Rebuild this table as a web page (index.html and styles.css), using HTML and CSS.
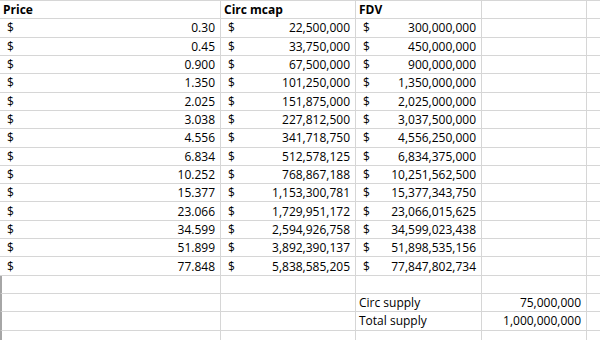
FILE: index.html
```html
<!DOCTYPE html>
<html>
<head>
<meta charset="utf-8">
<link rel="stylesheet" href="styles.css">
</head>
<body>
<div class="sheet">
  <div class="c txt b">Price</div><div class="c txt b">Circ mcap</div><div class="c txt b">FDV</div><div class="c"></div><div class="c e"></div>

  <div class="c cur"><span>$</span><span>0.30</span></div><div class="c cur"><span>$</span><span>22,500,000</span></div><div class="c cur"><span>$</span><span>300,000,000</span></div><div class="c"></div><div class="c e"></div>
  <div class="c cur"><span>$</span><span>0.45</span></div><div class="c cur"><span>$</span><span>33,750,000</span></div><div class="c cur"><span>$</span><span>450,000,000</span></div><div class="c"></div><div class="c e"></div>
  <div class="c cur"><span>$</span><span>0.900</span></div><div class="c cur"><span>$</span><span>67,500,000</span></div><div class="c cur"><span>$</span><span>900,000,000</span></div><div class="c"></div><div class="c e"></div>
  <div class="c cur"><span>$</span><span>1.350</span></div><div class="c cur"><span>$</span><span>101,250,000</span></div><div class="c cur"><span>$</span><span>1,350,000,000</span></div><div class="c"></div><div class="c e"></div>
  <div class="c cur"><span>$</span><span>2.025</span></div><div class="c cur"><span>$</span><span>151,875,000</span></div><div class="c cur"><span>$</span><span>2,025,000,000</span></div><div class="c"></div><div class="c e"></div>
  <div class="c cur"><span>$</span><span>3.038</span></div><div class="c cur"><span>$</span><span>227,812,500</span></div><div class="c cur"><span>$</span><span>3,037,500,000</span></div><div class="c"></div><div class="c e"></div>
  <div class="c cur"><span>$</span><span>4.556</span></div><div class="c cur"><span>$</span><span>341,718,750</span></div><div class="c cur"><span>$</span><span>4,556,250,000</span></div><div class="c"></div><div class="c e"></div>
  <div class="c cur"><span>$</span><span>6.834</span></div><div class="c cur"><span>$</span><span>512,578,125</span></div><div class="c cur"><span>$</span><span>6,834,375,000</span></div><div class="c"></div><div class="c e"></div>
  <div class="c cur"><span>$</span><span>10.252</span></div><div class="c cur"><span>$</span><span>768,867,188</span></div><div class="c cur"><span>$</span><span>10,251,562,500</span></div><div class="c"></div><div class="c e"></div>
  <div class="c cur"><span>$</span><span>15.377</span></div><div class="c cur"><span>$</span><span>1,153,300,781</span></div><div class="c cur"><span>$</span><span>15,377,343,750</span></div><div class="c"></div><div class="c e"></div>
  <div class="c cur"><span>$</span><span>23.066</span></div><div class="c cur"><span>$</span><span>1,729,951,172</span></div><div class="c cur"><span>$</span><span>23,066,015,625</span></div><div class="c"></div><div class="c e"></div>
  <div class="c cur"><span>$</span><span>34.599</span></div><div class="c cur"><span>$</span><span>2,594,926,758</span></div><div class="c cur"><span>$</span><span>34,599,023,438</span></div><div class="c"></div><div class="c e"></div>
  <div class="c cur"><span>$</span><span>51.899</span></div><div class="c cur"><span>$</span><span>3,892,390,137</span></div><div class="c cur"><span>$</span><span>51,898,535,156</span></div><div class="c"></div><div class="c e"></div>
  <div class="c cur"><span>$</span><span>77.848</span></div><div class="c cur"><span>$</span><span>5,838,585,205</span></div><div class="c cur"><span>$</span><span>77,847,802,734</span></div><div class="c"></div><div class="c e"></div>

  <div class="c edge"></div><div class="c"></div><div class="c"></div><div class="c"></div><div class="c e"></div>
  <div class="c edge"></div><div class="c"></div><div class="c txt">Circ supply</div><div class="c num">75,000,000</div><div class="c e"></div>
  <div class="c edge"></div><div class="c"></div><div class="c txt">Total supply</div><div class="c num">1,000,000,000</div><div class="c e"></div>
  <div class="c edge"></div><div class="c"></div><div class="c"></div><div class="c"></div><div class="c e"></div>
</div>
</body>
</html>
```
FILE: styles.css
```css
html, body {
  margin: 0;
  padding: 0;
  background: #ffffff;
}

body {
  width: 600px;
  height: 340px;
  overflow: hidden;
}

.sheet {
  display: grid;
  grid-template-columns: 221px 135px 126px 105px 1fr;
  grid-auto-rows: 18.32px;
  border-top: 1px solid #d6d6d6;
  font-family: "Open Sans", "Liberation Sans", sans-serif;
  font-size: 12px;
  color: #000000;
}

.c {
  box-sizing: border-box;
  border-right: 1px solid #d6d6d6;
  border-bottom: 1px solid #d6d6d6;
  display: flex;
  align-items: center;
  white-space: nowrap;
  line-height: 1;
  padding-top: 1px;
}

.e {
  border-right: none;
}

.txt {
  padding-left: 3px;
}

.b {
  font-weight: 700;
}

.cur {
  justify-content: space-between;
  padding-left: 7px;
  padding-right: 5px;
}

.num {
  justify-content: flex-end;
  padding-right: 5px;
}

.edge {
  border-left: 2px solid #a6a6a6;
}
```
